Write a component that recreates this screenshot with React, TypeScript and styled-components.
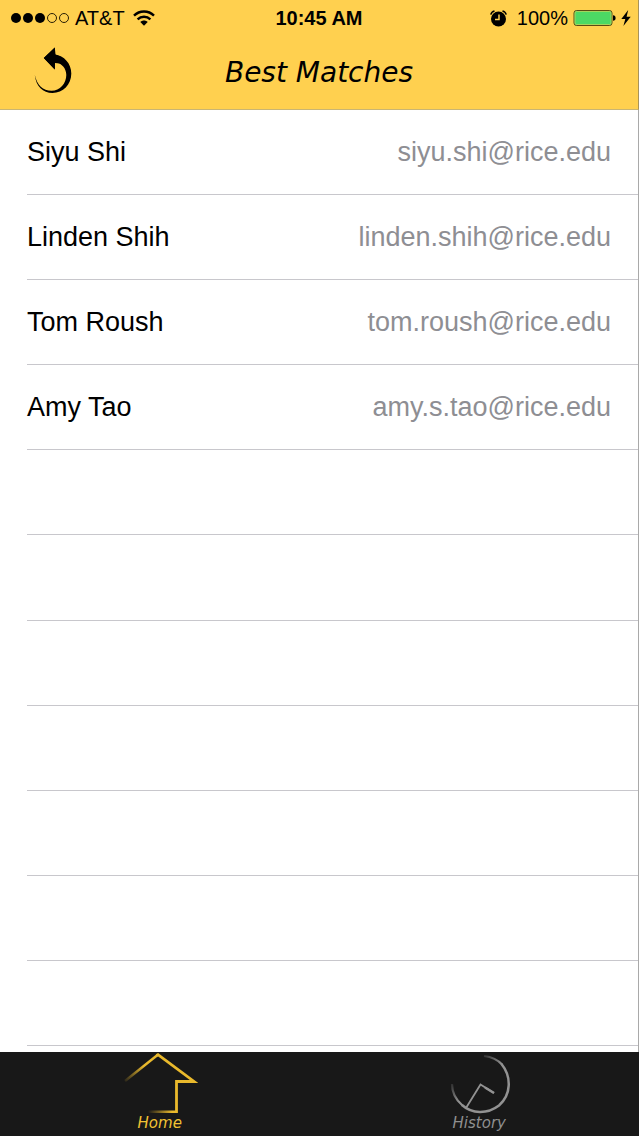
import React from "react";
import styled, { createGlobalStyle } from "styled-components";

const sans = `"Helvetica Neue", "Liberation Sans", Arial, sans-serif`;
const script = `"Bradley Hand", "DejaVu Sans", cursive`;

const GlobalStyle = createGlobalStyle`
  *, *::before, *::after { box-sizing: border-box; }
  body { margin: 0; background: #fff; font-family: ${sans}; color: #000; }
`;

const Screen = styled.div`
  display: flex;
  flex-direction: column;
  min-height: 100vh;
`;

const Header = styled.header`
  background: #ffd04f;
  border-bottom: 1px solid #c9b573;
  border-right: 1px solid #a8935a;
`;

const StatusBar = styled.div`
  display: grid;
  grid-template-columns: 1fr auto 1fr;
  align-items: center;
  height: 36px;
  padding: 0 7px;
  font-size: 20px;
  line-height: 36px;
`;

const StatusGroup = styled.div<{ $end?: boolean }>`
  display: flex;
  align-items: center;
  justify-content: ${(p) => (p.$end ? "flex-end" : "flex-start")};
  gap: ${(p) => (p.$end ? "5px" : "6px")};
  white-space: nowrap;
`;

const Clock = styled.time`
  font-weight: 700;
`;

const NavBar = styled.div`
  display: grid;
  grid-template-columns: 1fr auto 1fr;
  align-items: center;
  height: 73px;
  padding: 0 32px;
`;

const BackButton = styled.button`
  display: block;
  justify-self: start;
  padding: 0;
  border: 0;
  background: none;
  cursor: pointer;
`;

const Title = styled.h1`
  margin: 0;
  font-family: ${script};
  font-size: 28px;
  font-style: italic;
  font-weight: 400;
  line-height: 36px;
`;

const List = styled.ul`
  flex: 1;
  display: grid;
  grid-auto-rows: minmax(85px, 1fr);
  margin: 0;
  padding: 0 0 6px 27px;
  list-style: none;
  background: #fff;
  border-right: 1px solid #a9a9a9;
`;

const Row = styled.li`
  display: flex;
  align-items: center;
  justify-content: space-between;
  padding-right: 27px;
  border-bottom: 1px solid #c8c7cc;
  font-size: 27px;
  line-height: 32px;
`;

const Email = styled.span`
  color: #8e8e93;
`;

const TabBar = styled.nav`
  display: flex;
  height: 84px;
  background: #181818;
`;

const Tab = styled.a<{ $active?: boolean }>`
  flex: 1;
  display: flex;
  flex-direction: column;
  align-items: center;
  color: ${(p) => (p.$active ? "#f2c233" : "#8f8f8f")};
  font-family: ${script};
  font-size: 15px;
  font-style: italic;
  line-height: 18px;
  text-decoration: none;
`;

const contacts = [
  { name: "Siyu Shi", email: "siyu.shi@rice.edu" },
  { name: "Linden Shih", email: "linden.shih@rice.edu" },
  { name: "Tom Roush", email: "tom.roush@rice.edu" },
  { name: "Amy Tao", email: "amy.s.tao@rice.edu" },
];
const emptyRows = [0, 1, 2, 3, 4, 5, 6];

const Signal = () => (
  <svg width="62" height="12" viewBox="-4 0 62 12" aria-hidden="true">
    {[5, 17, 29].map((x) => (
      <circle key={x} cx={x} cy="6" r="5" />
    ))}
    {[41, 53].map((x) => (
      <circle key={x} cx={x} cy="6" r="4.5" fill="none" stroke="#2a1f05" />
    ))}
  </svg>
);

const Wifi = () => (
  <svg width="24" height="16" viewBox="-2 0 24 16" aria-hidden="true">
    <g fill="none" stroke="#000" strokeWidth="2.4">
      <path d="M1 5.6C6.600 .1 15.400 .1 21 5.600" />
      <path d="M4.600 9.300C8.200 5.900 13.800 5.900 17.400 9.300" />
    </g>
    <path d="M7.300 12C9.400 10 12.600 10 14.700 12L11 15.700Z" />
  </svg>
);

const Alarm = () => (
  <svg width="22" height="17" viewBox="0 0 22 17" aria-hidden="true">
    <circle cx="8.500" cy="9" r="7.500" />
    <path d="M.8 4.600Q1.500 1.700 4.500 1M16.200 4.600Q15.500 1.700 12.500 1" fill="none" stroke="#000" strokeWidth="1.500" />
    <path d="M9 4.500V9.400H5" fill="none" stroke="#ffd04f" strokeWidth="1.500" />
  </svg>
);

const Battery = () => (
  <svg width="43" height="18" viewBox="0 0 43 18" aria-hidden="true">
    <rect x="1" y="1.500" width="38" height="15" rx="2.500" fill="#4cd964" stroke="#5b4a14" />
    <rect x="2" y="2.500" width="36" height="13" rx="1.500" fill="none" stroke="#c8d35a" strokeWidth=".7" />
    <path d="M40 6.200Q42.600 6.400 42.600 9T40 11.800Z" />
  </svg>
);

const Bolt = () => (
  <svg width="10" height="16" viewBox="0 0 10 16" aria-hidden="true">
    <path d="M7.200 0L.3 9H4.300L2.400 16L9.700 6.700H5.600Z" />
  </svg>
);

const BackArrow = () => (
  <svg width="42" height="48" viewBox="0 0 42 48" aria-hidden="true">
    <path d="M11.800 11L22.800 .5V7.500C32 8.500 39.300 16.500 39.300 26.500C39.300 37.500 31 46 20.500 46C11 46 4 39.500 2.800 28C5 38 11 43.800 19.500 43.800C28 43.800 34.300 36.500 34.300 28C34.300 21.500 30 16.200 22.800 15V22.500Z" />
    <path d="M22.800 22.500L11.800 11L22.800 .5L23.500 7.500L29 10L28 16.500L23 16Z" />
  </svg>
);

const HomeIcon = () => (
  <svg width="76" height="62" viewBox="0 0 76 62" aria-hidden="true">
    <defs>
      <linearGradient id="roof" gradientUnits="userSpaceOnUse" x1="3" y1="29" x2="22" y2="14">
        <stop offset="0" stopColor="#e9b92c" stopOpacity=".1" />
        <stop offset="1" stopColor="#e9b92c" />
      </linearGradient>
      <linearGradient id="floor" gradientUnits="userSpaceOnUse" x1="26" y1="0" x2="50" y2="0">
        <stop offset="0" stopColor="#e9b92c" stopOpacity="0" />
        <stop offset="1" stopColor="#e9b92c" />
      </linearGradient>
    </defs>
    <path d="M3 29L35.500 3" fill="none" stroke="url(#roof)" strokeWidth="2.500" />
    <path d="M34.500 3.500L36 2.600L72 29.500H54.500V61" fill="none" stroke="#e9b92c" strokeWidth="2.800" />
    <rect x="26" y="58.500" width="29" height="2.500" fill="url(#floor)" />
  </svg>
);

const HistoryIcon = () => (
  <svg width="64" height="62" viewBox="-3 0 64 62" aria-hidden="true">
    <defs>
      <linearGradient id="arcTop" gradientUnits="userSpaceOnUse" x1="34" y1="3" x2="52" y2="12">
        <stop offset="0" stopColor="#929292" stopOpacity=".2" />
        <stop offset="1" stopColor="#929292" />
      </linearGradient>
      <linearGradient id="arcSide" gradientUnits="userSpaceOnUse" x1="2" y1="32" x2="9" y2="50">
        <stop offset="0" stopColor="#929292" stopOpacity=".2" />
        <stop offset="1" stopColor="#929292" />
      </linearGradient>
    </defs>
    <g fill="none" stroke="#929292">
      <path d="M34 4C42 5 48 8 52 12.500" stroke="url(#arcTop)" strokeWidth="2.200" />
      <path d="M51.500 12C62 25 61 43 49 53.500C37 62.500 22 62 12 53" strokeWidth="2.500" />
      <path d="M12.500 53.500C6 48 2 41 2 32" stroke="url(#arcSide)" strokeWidth="2.200" />
      <path d="M16 56L30.500 32.500L44 41" strokeWidth="1.800" />
      <path d="M35 35.500L44 41" strokeWidth="2.500" />
    </g>
  </svg>
);

export default function App() {
  return (
    <Screen>
      <GlobalStyle />
      <Header>
        <StatusBar>
          <StatusGroup>
            <Signal />
            <span>AT&amp;T</span>
            <Wifi />
          </StatusGroup>
          <Clock>10:45 AM</Clock>
          <StatusGroup $end>
            <Alarm />
            <span>100%</span>
            <Battery />
            <Bolt />
          </StatusGroup>
        </StatusBar>
        <NavBar>
          <BackButton type="button" aria-label="Back">
            <BackArrow />
          </BackButton>
          <Title>Best Matches</Title>
        </NavBar>
      </Header>
      <List>
        {contacts.map((c) => (
          <Row key={c.email}>
            <span>{c.name}</span>
            <Email>{c.email}</Email>
          </Row>
        ))}
        {emptyRows.map((n) => (
          <Row key={n} aria-hidden="true" />
        ))}
      </List>
      <TabBar>
        <Tab href="#home" $active aria-current="page">
          <HomeIcon />
          Home
        </Tab>
        <Tab href="#history">
          <HistoryIcon />
          History
        </Tab>
      </TabBar>
    </Screen>
  );
}
